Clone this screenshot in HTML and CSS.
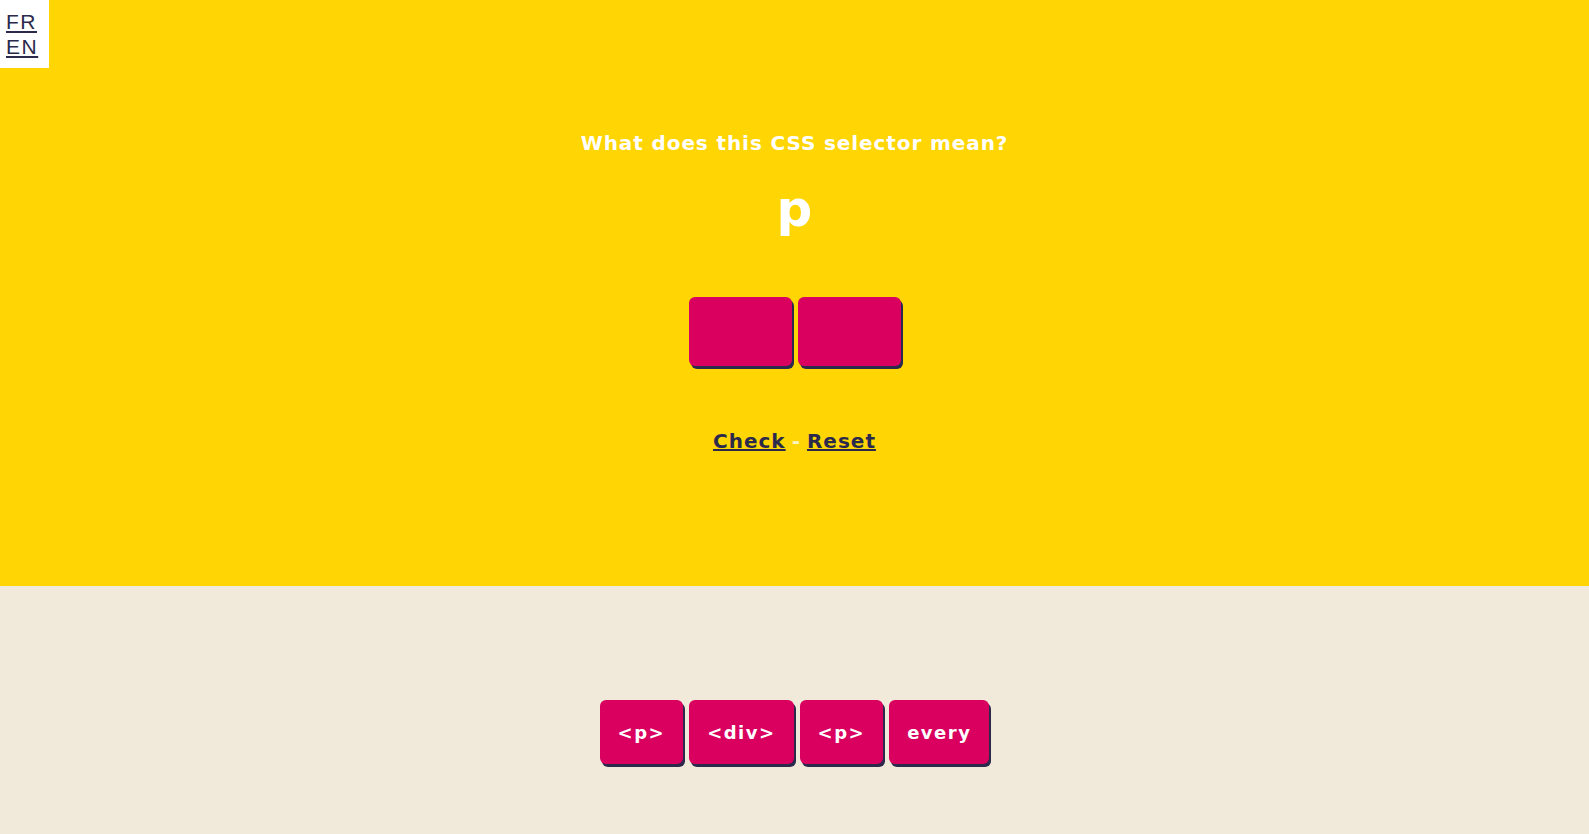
FILE: index.html
```html
<!DOCTYPE html>
<html lang="en">
<head>
<meta charset="utf-8">
<title>CSS selectors</title>
<link rel="stylesheet" href="styles.css">
</head>
<body>
<nav class="lang">
  <a href="#" class="lang-link">FR</a>
  <a href="#" class="lang-link">EN</a>
</nav>
<main class="stage">
  <h1 class="question">What does this CSS selector mean?</h1>
  <div class="selector">p</div>
  <div class="slots">
    <div class="tile slot"></div>
    <div class="tile slot"></div>
  </div>
  <div class="actions">
    <a href="#" class="action">Check</a>
    <span class="sep">-</span>
    <a href="#" class="action">Reset</a>
  </div>
</main>
<section class="pool">
  <div class="tiles">
    <div class="tile word">&lt;p&gt;</div>
    <div class="tile word">&lt;div&gt;</div>
    <div class="tile word">&lt;p&gt;</div>
    <div class="tile word">every</div>
  </div>
</section>
</body>
</html>
```

FILE: styles.css
```css
html, body {
  margin: 0;
  padding: 0;
}
body {
  font-family: "DejaVu Sans", sans-serif;
  background: #f1e9da;
  color: #2b2a4c;
}
.lang {
  position: absolute;
  top: 0;
  left: 0;
  width: 49px;
  height: 68px;
  background: #ffffff;
  display: flex;
  flex-direction: column;
  padding: 9px 0 0 6px;
  box-sizing: border-box;
}
.lang-link {
  color: #2b2a4c;
  font-family: "Liberation Sans", sans-serif;
  font-size: 21px;
  line-height: 25px;
  letter-spacing: 1.5px;
}
.stage {
  background: #ffd503;
  height: 586px;
  display: flex;
  flex-direction: column;
  align-items: center;
  padding-top: 128px;
  box-sizing: border-box;
}
.question {
  margin: 0;
  color: #ffffff;
  font-size: 20px;
  font-weight: bold;
  line-height: 30px;
  letter-spacing: 0.9px;
}
.selector {
  margin-top: 22px;
  color: #ffffff;
  font-size: 50px;
  font-weight: bold;
  line-height: 58px;
}
.slots {
  margin-top: 59px;
  display: flex;
  gap: 6px;
}
.tile {
  background: #d9005f;
  border-radius: 6px;
  box-shadow: 2px 3px 0 #2b2a4c;
}
.slot {
  width: 103px;
  height: 69px;
}
.actions {
  margin-top: 63px;
  display: flex;
  gap: 6px;
  align-items: baseline;
  font-size: 20px;
  font-weight: 600;
  letter-spacing: 1px;
}
.action {
  color: #2b2a4c;
}
.sep {
  color: #fff4c0;
}
.pool {
  height: 248px;
  display: flex;
  justify-content: center;
  padding-top: 114px;
  box-sizing: border-box;
}
.tiles {
  display: flex;
  gap: 6px;
  height: 64px;
}
.word {
  display: flex;
  align-items: center;
  padding: 0 18px;
  color: #ffffff;
  font-size: 18px;
  font-weight: 600;
  letter-spacing: 1.5px;
}
```
